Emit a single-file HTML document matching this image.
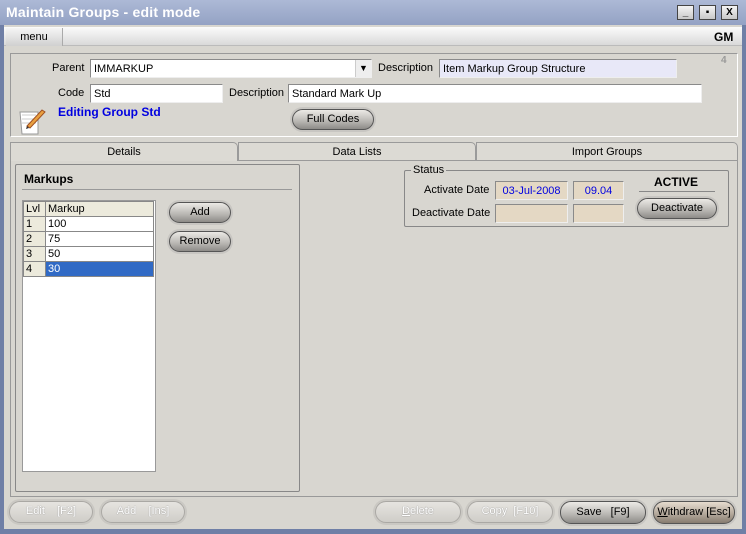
<!DOCTYPE html>
<html><head><style>
*{margin:0;padding:0;box-sizing:border-box}
body{width:746px;height:534px;overflow:hidden;font-family:"Liberation Sans",sans-serif;font-size:11px;background:#6f7fa6;position:relative}
.a{position:absolute}
.win{left:4px;top:25px;width:738px;height:504px;background:#d8d6d0}
.title{left:0;top:0;width:746px;height:25px;background:linear-gradient(#adb9d6,#94a2c4);color:#fff;font-weight:bold;font-size:14px;padding:4px 6px;letter-spacing:0.2px}
.wb{top:5px;width:17px;height:15px;background:linear-gradient(#f4f4f4,#c8c8c8);border:1px solid #444;font-size:10px;font-weight:bold;text-align:center;line-height:13px;color:#000}
.menu{left:4px;top:27px;width:738px;height:19px;background:linear-gradient(#fbfbfb,#d9d9d9);border-bottom:1px solid #bbb}
.inp{background:#fff;border:1px solid #8a8a8a;border-right-color:#eee;border-bottom-color:#eee;padding:2px 3px;font-size:11px;height:19px;line-height:15px}
.lbl{font-size:11px;color:#000}
.btn{border-radius:11px;border:1px solid #555;background:linear-gradient(#eceae6,#b8b6b2 60%,#8d8b88);box-shadow:0 0 0 2px #c8c6c2;text-align:center;font-size:11px;line-height:19px;height:21px;color:#000}
.btnd{border-radius:11px;border:1px solid #aaa8a4;background:linear-gradient(#e6e4e0,#cfcdc8);box-shadow:0 0 0 2px #cac8c3;text-align:center;color:#fff;line-height:19px;height:22px;text-shadow:0 0 1px #777}
.tab{top:142px;height:19px;border:1px solid #9a9a9a;border-bottom:none;text-align:center;line-height:18px;background:#dcdad4;border-radius:0 5px 0 0}
td{border:1px solid #888;height:15px;font-size:11px;padding:0 2px}
</style></head><body>
<div class="a title">Maintain Groups - edit mode</div>
<div class="a wb" style="left:677px">_</div>
<div class="a wb" style="left:699px">▪</div>
<div class="a wb" style="left:721px">X</div>
<div class="a win"></div>
<div class="a menu"></div>
<div class="a" style="left:6px;top:28px;width:57px;height:18px;background:linear-gradient(#f5f5f5,#d0d0d0);border-right:1px solid #aaa;text-align:center;line-height:18px">menu</div>
<div class="a" style="left:714px;top:30px;font-weight:bold;font-size:12px">GM</div>
<div class="a" style="left:10px;top:53px;width:728px;height:84px;border:1px solid #999;border-right-color:#fff;border-bottom-color:#fff"></div>
<div class="a" style="left:721px;top:55px;color:#999;font-weight:bold;font-size:10px">4</div>
<div class="a lbl" style="left:52px;top:62px">Parent</div>
<div class="a inp" style="left:90px;top:59px;width:282px">IMMARKUP</div>
<div class="a" style="left:355px;top:60px;width:16px;height:17px;background:#eee;border-left:1px solid #ccc;text-align:center;font-size:9px;line-height:17px">▼</div>
<div class="a lbl" style="left:378px;top:62px">Description</div>
<div class="a inp" style="left:439px;top:59px;width:238px;background:#e8e8f8">Item Markup Group Structure</div>
<div class="a lbl" style="left:58px;top:87px">Code</div>
<div class="a inp" style="left:90px;top:84px;width:133px">Std</div>
<div class="a lbl" style="left:229px;top:87px">Description</div>
<div class="a inp" style="left:288px;top:84px;width:414px">Standard Mark Up</div>
<div class="a" style="left:58px;top:105px;color:#0000e0;font-weight:bold;font-size:12px">Editing Group Std</div>
<svg class="a" style="left:15px;top:106px" width="32" height="30"><path d="M5 6h18v22H7z" fill="#fff" stroke="#999"/><path d="M7 9h14M7 13h14M7 17h14" stroke="#ccc"/><path d="M12 20L27 4l3 2-15 16z" fill="#e9a040" stroke="#a05020"/><path d="M12 20l-1 3 3-1" fill="#333"/></svg>
<div class="a btn" style="left:292px;top:109px;width:82px">Full Codes</div>
<div class="a" style="left:10px;top:160px;width:728px;height:337px;border:1px solid #999;border-top:none"></div>
<div class="a tab" style="left:10px;width:228px">Details</div>
<div class="a tab" style="left:238px;width:238px;border-bottom:1px solid #9a9a9a">Data Lists</div>
<div class="a tab" style="left:476px;width:262px;border-bottom:1px solid #9a9a9a">Import Groups</div>
<div class="a" style="left:15px;top:164px;width:285px;height:328px;border:1px solid #888;border-radius:2px"></div>
<div class="a" style="left:24px;top:172px;font-weight:bold;font-size:12px">Markups</div>
<div class="a" style="left:22px;top:189px;width:270px;border-top:1px solid #999"></div>
<div class="a" style="left:22px;top:200px;width:134px;height:272px;background:#fff;border:1px solid #999"></div>
<table class="a" style="left:23px;top:201px;width:131px;border-collapse:collapse">
<tr style="background:#eceadc"><td style="width:22px">Lvl</td><td>Markup</td></tr>
<tr><td style="background:#eceadc">1</td><td>100</td></tr>
<tr><td style="background:#eceadc">2</td><td>75</td></tr>
<tr><td style="background:#eceadc">3</td><td>50</td></tr>
<tr><td style="background:#eceadc">4</td><td style="background:#316ac5;color:#fff">30</td></tr>
</table>
<div class="a btn" style="left:169px;top:202px;width:62px">Add</div>
<div class="a btn" style="left:169px;top:231px;width:62px">Remove</div>
<div class="a" style="left:404px;top:170px;width:325px;height:57px;border:1px solid #888;border-radius:2px"></div>
<div class="a" style="left:411px;top:164px;background:#d8d6d0;padding:0 2px">Status</div>
<div class="a lbl" style="left:424px;top:184px">Activate Date</div>
<div class="a lbl" style="left:412px;top:207px">Deactivate Date</div>
<div class="a inp" style="left:495px;top:181px;width:73px;background:#e4d8c4;color:#0000e0;text-align:center">03-Jul-2008</div>
<div class="a inp" style="left:573px;top:181px;width:51px;background:#e4d8c4;color:#0000e0;text-align:center">09.04</div>
<div class="a inp" style="left:495px;top:204px;width:73px;background:#e4d8c4"></div>
<div class="a inp" style="left:573px;top:204px;width:51px;background:#e4d8c4"></div>
<div class="a" style="left:654px;top:175px;font-weight:bold;font-size:12px">ACTIVE</div>
<div class="a" style="left:639px;top:191px;width:76px;border-top:1px solid #888"></div>
<div class="a btn" style="left:637px;top:198px;width:80px">Deactivate</div>
<div class="a btnd" style="left:9px;top:501px;width:84px">Edit &nbsp;&nbsp; [F2]</div>
<div class="a btnd" style="left:101px;top:501px;width:84px">Add &nbsp;&nbsp; [Ins]</div>
<div class="a btnd" style="left:375px;top:501px;width:86px"><u>D</u>elete</div>
<div class="a btnd" style="left:467px;top:501px;width:86px">Copy &nbsp;[F10]</div>
<div class="a btn" style="left:560px;top:501px;width:86px;height:23px;line-height:21px">Save &nbsp; [F9]</div>
<div class="a btn" style="left:653px;top:501px;width:82px;height:23px;line-height:21px;background:linear-gradient(#e6dccf,#b0a598 60%,#877c70)"><u>W</u>ithdraw [Esc]</div>
</body></html>
